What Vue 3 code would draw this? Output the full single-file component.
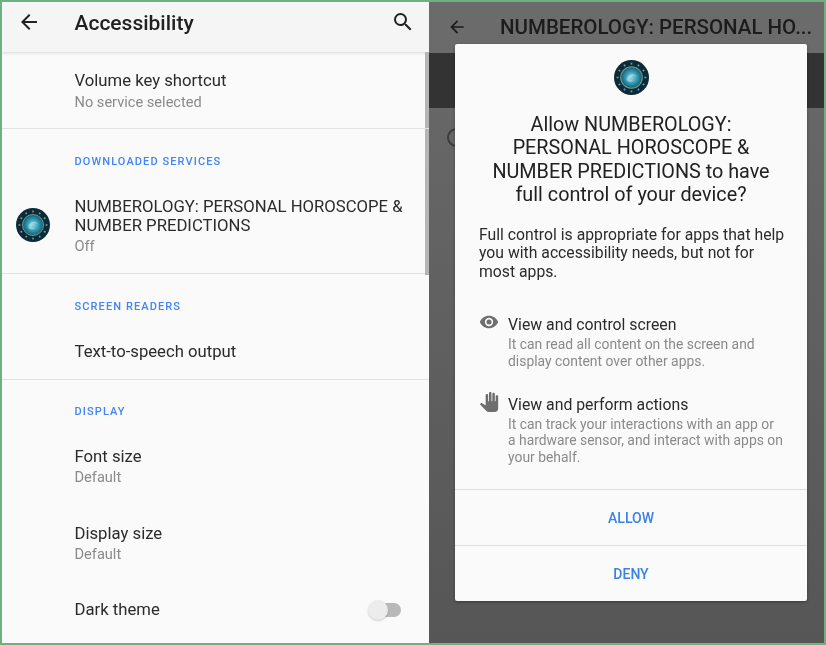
<script setup>
const settingsTop = [{ title: 'Volume key shortcut', sub: 'No service selected' }]
const displayRows = [
  { title: 'Font size', sub: 'Default' },
  { title: 'Display size', sub: 'Default' },
]
const ticks = Array.from({ length: 12 }, (_, i) => i * 30)
</script>

<template>
  <div class="frame">
    <!-- Settings list -->
    <section class="settings">
      <header class="appbar">
        <svg width="24" height="24" viewBox="0 0 24 24" fill="#212121">
          <path d="M20 11H7.83l5.59-5.59L12 4l-8 8 8 8 1.41-1.41L7.83 13H20v-2z"/>
        </svg>
        <h1 class="appbar__title">Accessibility</h1>
        <svg width="24" height="24" viewBox="0 0 24 24" fill="#212121">
          <path d="M15.5 14h-.79l-.28-.27A6.47 6.47 0 0 0 16 9.5 6.5 6.5 0 1 0 9.5 16c1.61 0 3.09-.59 4.23-1.57l.27.28v.79l5 4.99L20.49 19l-4.99-5zm-6 0C7.01 14 5 11.99 5 9.5S7.01 5 9.5 5 14 7.01 14 9.5 11.99 14 9.5 14z"/>
        </svg>
      </header>

      <div class="scrollbar" aria-hidden="true"></div>

      <div v-for="row in settingsTop" :key="row.title" class="row row--first">
        <div class="row__title">{{ row.title }}</div>
        <div class="row__sub">{{ row.sub }}</div>
      </div>

      <div class="group group--services">
        <div class="group__label">DOWNLOADED SERVICES</div>
        <div class="row row--app">
          <svg class="row__icon" width="34" height="34" viewBox="0 0 34 34">
            <defs>
              <radialGradient id="swirl" cx="50%" cy="50%" r="50%">
                <stop offset="0" stop-color="#8fd8e6"/>
                <stop offset="0.6" stop-color="#2c93ad"/>
                <stop offset="1" stop-color="#17566a"/>
              </radialGradient>
            </defs>
            <circle cx="17" cy="17" r="17" fill="#0c2a38"/>
            <circle cx="17" cy="17" r="10.5" fill="url(#swirl)" stroke="#6a9c90" stroke-width="1"/>
            <path d="M12 19c1-5 7-7 10-3-2-1-5-1-6 1s1 4 4 3c-3 2-7 2-8-1z" fill="#d4f2f5" opacity="0.45"/>
            <g v-for="deg in ticks" :key="deg" :transform="`rotate(${deg} 17 17)`">
              <rect x="16.2" y="2.6" width="1.6" height="1.8" fill="#6f9fa3"/>
            </g>
          </svg>
          <div class="row__title">NUMBEROLOGY: PERSONAL HOROSCOPE &amp; NUMBER PREDICTIONS</div>
          <div class="row__sub">Off</div>
        </div>
      </div>

      <div class="group group--readers">
        <div class="group__label">SCREEN READERS</div>
        <div class="row row--single">
          <div class="row__title">Text-to-speech output</div>
        </div>
      </div>

      <div class="group group--display">
        <div class="group__label">DISPLAY</div>
        <div v-for="row in displayRows" :key="row.title" class="row row--double">
          <div class="row__title">{{ row.title }}</div>
          <div class="row__sub">{{ row.sub }}</div>
        </div>
        <div class="row row--toggle">
          <div class="row__title">Dark theme</div>
          <div class="switch" aria-hidden="true">
            <span class="switch__track"></span>
            <span class="switch__thumb"></span>
          </div>
        </div>
      </div>
    </section>

    <!-- Dimmed page behind the permission dialog -->
    <section class="dimmed">
      <div class="dimmed__bar">
        <svg width="20" height="20" viewBox="0 0 24 24" fill="#1b1b1b">
          <path d="M20 11H7.83l5.59-5.59L12 4l-8 8 8 8 1.41-1.41L7.83 13H20v-2z"/>
        </svg>
        <span class="dimmed__title">NUMBEROLOGY: PERSONAL HO...</span>
      </div>
      <div class="dimmed__band"></div>
      <div class="dimmed__radio"></div>

      <div class="dialog">
        <svg class="dialog__logo" width="35" height="35" viewBox="0 0 34 34">
          <defs>
            <radialGradient id="swirl2" cx="50%" cy="50%" r="50%">
              <stop offset="0" stop-color="#8fd8e6"/>
              <stop offset="0.6" stop-color="#2c93ad"/>
              <stop offset="1" stop-color="#17566a"/>
            </radialGradient>
          </defs>
          <circle cx="17" cy="17" r="17" fill="#0c2a38"/>
          <circle cx="17" cy="17" r="10.5" fill="url(#swirl2)" stroke="#6a9c90" stroke-width="1"/>
          <path d="M12 19c1-5 7-7 10-3-2-1-5-1-6 1s1 4 4 3c-3 2-7 2-8-1z" fill="#d4f2f5" opacity="0.45"/>
          <g v-for="deg in ticks" :key="deg" :transform="`rotate(${deg} 17 17)`">
            <rect x="16.2" y="2.6" width="1.6" height="1.8" fill="#6f9fa3"/>
          </g>
        </svg>
        <h2 class="dialog__title">Allow NUMBEROLOGY: PERSONAL HOROSCOPE &amp; NUMBER PREDICTIONS to have full control of your device?</h2>
        <p class="dialog__intro">Full control is appropriate for apps that help you with accessibility needs, but not for most apps.</p>

        <div class="perm perm--view">
          <svg class="perm__icon" width="20" height="20" viewBox="0 0 24 24" fill="#6e6e6e">
            <path d="M12 4.5C7 4.5 2.73 7.61 1 12c1.73 4.39 6 7.5 11 7.5s9.27-3.11 11-7.5c-1.73-4.39-6-7.5-11-7.5zM12 17a5 5 0 1 1 0-10 5 5 0 0 1 0 10zm0-8a3 3 0 1 0 0 6 3 3 0 0 0 0-6z"/>
          </svg>
          <div>
            <div class="perm__title">View and control screen</div>
            <div class="perm__desc">It can read all content on the screen and display content over other apps.</div>
          </div>
        </div>

        <div class="perm perm--act">
          <svg class="perm__icon" width="20" height="20" viewBox="0 0 24 24" fill="#6e6e6e">
            <path d="M23 5.5V20c0 2.2-1.8 4-4 4h-7.3c-1.08 0-2.1-.43-2.85-1.19L1 14.83s1.26-1.23 1.3-1.25c.22-.19.49-.29.79-.29.22 0 .42.06.6.16.04.01 4.31 2.46 4.31 2.46V4c0-.83.67-1.5 1.5-1.5S11 3.17 11 4v7h1V1.5c0-.83.67-1.5 1.5-1.5S15 .67 15 1.5V11h1V2.5c0-.83.67-1.5 1.5-1.5s1.5.67 1.5 1.5V11h1V5.5c0-.83.67-1.5 1.5-1.5s1.5.67 1.5 1.5z"/>
          </svg>
          <div>
            <div class="perm__title">View and perform actions</div>
            <div class="perm__desc">It can track your interactions with an app or a hardware sensor, and interact with apps on your behalf.</div>
          </div>
        </div>

        <div class="dialog__actions">
          <button class="dialog__btn">ALLOW</button>
          <button class="dialog__btn">DENY</button>
        </div>
      </div>
    </section>
  </div>
</template>

<style>
html, body { margin: 0; background: #fff; }
</style>

<style scoped>
.frame {
  box-sizing: border-box;
  width: 826px;
  height: 645px;
  border: 2px solid #70b07e;
  display: flex;
  overflow: hidden;
  font-family: Roboto, "Liberation Sans", sans-serif;
  filter: blur(0.35px);
}

/* ─── Settings list ─────────────────────────────── */
.settings {
  position: relative;
  width: 427px;
  flex-shrink: 0;
  background: #fafafa;
  overflow: hidden;
}

.appbar {
  height: 50px;
  background: #f5f5f5;
  display: flex;
  align-items: flex-start;
  box-shadow: 0 1px 3px rgba(0, 0, 0, 0.14);
  position: relative;
  padding: 8px 14px 0 15px;
  box-sizing: border-box;
}

.appbar__title {
  margin: 0 0 0 33.5px;
  font-size: 21px;
  line-height: 26px;
  font-weight: 500;
  color: #212121;
  flex: 1;
}

.scrollbar {
  position: absolute;
  top: 50px;
  right: 0;
  width: 4px;
  height: 223px;
  background: #b5b5b5;
}

.row {
  padding-left: 72.5px;
  position: relative;
}

.row__title {
  font-size: 16.7px;
  line-height: 19.5px;
  color: #2b2b2b;
}

.row__sub {
  font-size: 14.6px;
  line-height: 20px;
  color: #8a8a8a;
  margin-top: 1px;
}

.row--first {
  height: 77px;
  box-sizing: border-box;
  padding-top: 19px;
  border-bottom: 1px solid #e2e2e2;
}

.group { border-bottom: 1px solid #e2e2e2; box-sizing: border-box; }
.group--display { border-bottom: 0; }
.group--services { height: 145px; }
.group--readers { height: 106px; }

.group__label {
  padding: 26px 0 0 72.5px;
  font-size: 11px;
  line-height: 13px;
  font-weight: 500;
  letter-spacing: 1.1px;
  color: #4285f4;
}

.group--display .group__label { padding-top: 25px; }

.row--app { padding-top: 29px; padding-right: 20px; }
.row--app .row__title { line-height: 19.2px; }

.row__icon {
  position: absolute;
  left: 13.5px;
  top: 40px;
}

.row--single { padding-top: 29px; }

.row--double { height: 77px; box-sizing: border-box; padding-top: 29px; }
.row--double .row__sub { margin-top: 0; }

.row--toggle {
  padding-top: 28px;
  display: flex;
  justify-content: space-between;
  padding-right: 28px;
}

.switch {
  position: relative;
  width: 33px;
  height: 20px;
}

.switch__track {
  position: absolute;
  left: 4px;
  right: 0;
  top: 3px;
  height: 14px;
  border-radius: 7px;
  background: #b9b9b9;
}

.switch__thumb {
  position: absolute;
  left: 0;
  top: 0;
  width: 20px;
  height: 20px;
  border-radius: 50%;
  background: #ececec;
  box-shadow: 0 1px 2px rgba(0, 0, 0, 0.18);
}

/* ─── Dimmed page ───────────────────────────────── */
.dimmed {
  position: relative;
  flex: 1;
  background: linear-gradient(#6a6a6a, #565656);
  overflow: hidden;
}

.dimmed__bar {
  height: 51px;
  background: #6b6b6b;
  display: flex;
  align-items: center;
  padding-left: 18px;
  box-sizing: border-box;
}

.dimmed__bar svg { margin-top: -1px; }

.dimmed__title {
  margin-left: 33px;
  font-size: 20.5px;
  font-weight: 500;
  color: #1c1c1c;
  margin-top: -1px;
}

.dimmed__band {
  height: 55px;
  background: #333;
}

.dimmed__radio {
  position: absolute;
  left: 18px;
  top: 126px;
  width: 15px;
  height: 15px;
  border: 2px solid #3c3c3c;
  border-radius: 50%;
}

.dialog {
  position: absolute;
  left: 26px;
  top: 42px;
  width: 352px;
  height: 557px;
  box-sizing: border-box;
  background: #fafafa;
  border-radius: 2px;
  box-shadow: 0 1px 3px rgba(0, 0, 0, 0.35);
  padding: 16px 0 0;
  display: flex;
  flex-direction: column;
}

.dialog__logo {
  align-self: center;
  flex-shrink: 0;
}

.dialog__title {
  margin: 17.5px 0 0;
  padding: 0 24px;
  text-align: center;
  font-size: 19.8px;
  line-height: 23.6px;
  font-weight: 400;
  color: #212121;
}

.dialog__intro {
  margin: 19px 0 0;
  padding: 0 20px 0 24px;
  font-size: 15.75px;
  line-height: 18.5px;
  color: #2b2b2b;
}

.perm {
  display: flex;
  gap: 9px;
  padding: 0 24px;
}

.perm--view { margin-top: 34px; }
.perm--act { margin-top: 26px; }

.perm__icon { flex-shrink: 0; margin-top: -3px; }

.perm__title {
  font-size: 15.8px;
  line-height: 20px;
  color: #2b2b2b;
}

.perm__desc {
  font-size: 13.9px;
  line-height: 16.3px;
  color: #8a8a8a;
  margin-top: 1px;
}

.dialog__actions {
  margin-top: auto;
  display: flex;
  flex-direction: column;
}

.dialog__btn {
  height: 56px;
  background: none;
  border: 0;
  border-top: 1px solid #dedede;
  color: #3b82e6;
  font: 500 14px Roboto, sans-serif;
  padding: 0;
}
</style>
